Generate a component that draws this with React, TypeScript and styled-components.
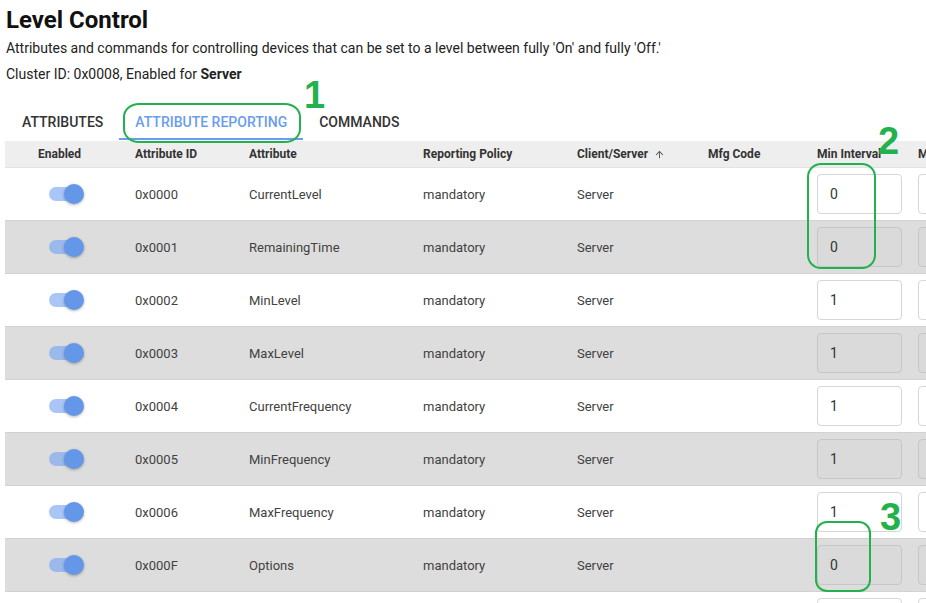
import React from "react";
import styled, { createGlobalStyle } from "styled-components";

const Global = createGlobalStyle`
  html, body { margin: 0; padding: 0; background: #fff; overflow: hidden; }
  body { font-family: Roboto, "Liberation Sans", Arial, sans-serif; color: #212121; }
`;

const Page = styled.div`
  position: relative;
  width: 926px;
  height: 603px;
  overflow: hidden;
`;

const Header = styled.div`
  padding: 4px 0 0 6px;
`;

const Title = styled.h1`
  margin: 0;
  font-size: 24px;
  line-height: 32px;
  font-weight: 700;
  color: #111;
`;

const Desc = styled.p`
  margin: 2px 0 0;
  font-size: 14px;
  line-height: 20px;
  color: #222;
`;

const Cluster = styled.p`
  margin: 6px 0 0;
  font-size: 14px;
  line-height: 20px;
  color: #222;
  b { font-weight: 700; }
`;

const TabBar = styled.div`
  display: flex;
  margin-top: 17px;
  padding-left: 6px;
  height: 40px;
`;

const Tab = styled.div<{ $active?: boolean }>`
  position: relative;
  padding: 0 16px;
  display: flex;
  align-items: center;
  padding-top: 1px;
  font-size: 14px;
  font-weight: 500;
  letter-spacing: 0;
  text-transform: uppercase;
  color: ${(p) => (p.$active ? "#6a9cf0" : "#333")};
  &::after {
    content: "";
    display: ${(p) => (p.$active ? "block" : "none")};
    position: absolute;
    left: 0;
    right: 0;
    bottom: 1px;
    height: 2px;
    background: #6a9cf0;
  }
`;

const Table = styled.div`
  margin-left: 5px;
  width: 1100px;
`;

const cols = "130px 114px 174px 154px 131px 109px 101px 1fr";

const HeadRow = styled.div`
  display: grid;
  grid-template-columns: ${cols};
  height: 26px;
  align-items: center;
  background: #eeeeee;
  border-bottom: 1px solid #e2e2e2;
  font-size: 12px;
  font-weight: 700;
  color: #333;
`;

const HeadCell = styled.div<{ $pad?: number }>`
  padding-left: ${(p) => p.$pad ?? 0}px;
  display: flex;
  align-items: center;
  gap: 6px;
  white-space: nowrap;
`;

const Row = styled.div<{ $alt: boolean }>`
  display: grid;
  grid-template-columns: ${cols};
  height: 52px;
  align-items: center;
  background: ${(p) => (p.$alt ? "#dddddd" : "#ffffff")};
  border-bottom: 1px solid #d2d2d2;
  font-size: 13px;
  color: #424242;
`;

const Cell = styled.div`
  white-space: nowrap;
`;

const SwitchCell = styled.div`
  padding-left: 44px;
  display: flex;
  align-items: center;
`;

const Track = styled.div<{ $alt: boolean }>`
  position: relative;
  width: 32px;
  height: 14px;
  border-radius: 7px;
  background: ${(p) => (p.$alt ? "#9cb9ec" : "#a9c6f6")};
`;

const Thumb = styled.div`
  position: absolute;
  top: -3px;
  right: -3px;
  width: 20px;
  height: 20px;
  border-radius: 50%;
  background: #6497e8;
  box-shadow: 0 1px 3px rgba(0, 0, 0, 0.3);
`;

const Input = styled.div<{ $alt: boolean }>`
  box-sizing: border-box;
  width: 85px;
  height: 40px;
  border: 1px solid ${(p) => (p.$alt ? "#c6c6c6" : "#d6d6d6")};
  border-radius: 4px;
  background: ${(p) => (p.$alt ? "#dadada" : "#ffffff")};
  padding-left: 12px;
  display: flex;
  align-items: center;
  font-size: 14px;
  color: #333;
`;

const Mark = styled.div`
  position: absolute;
  border: 2.5px solid #22b14c;
  box-sizing: border-box;
  pointer-events: none;
`;

const Num = styled.div`
  position: absolute;
  font-family: "Liberation Sans", Arial, sans-serif;
  font-weight: 700;
  font-size: 38px;
  line-height: 1;
  color: #22b14c;
`;

const rows = [
  { id: "0x0000", name: "CurrentLevel", min: "0" },
  { id: "0x0001", name: "RemainingTime", min: "0" },
  { id: "0x0002", name: "MinLevel", min: "1" },
  { id: "0x0003", name: "MaxLevel", min: "1" },
  { id: "0x0004", name: "CurrentFrequency", min: "1" },
  { id: "0x0005", name: "MinFrequency", min: "1" },
  { id: "0x0006", name: "MaxFrequency", min: "1" },
  { id: "0x000F", name: "Options", min: "0" },
];

export default function App() {
  return (
    <Page>
      <Global />
      <Header>
        <Title>Level Control</Title>
        <Desc>
          Attributes and commands for controlling devices that can be set to a level between fully 'On' and fully 'Off.'
        </Desc>
        <Cluster>
          Cluster ID: 0x0008, Enabled for <b>Server</b>
        </Cluster>
      </Header>
      <TabBar>
        <Tab>Attributes</Tab>
        <Tab $active>Attribute Reporting</Tab>
        <Tab>Commands</Tab>
      </TabBar>
      <Table>
        <HeadRow>
          <HeadCell $pad={33}>Enabled</HeadCell>
          <HeadCell>Attribute ID</HeadCell>
          <HeadCell>Attribute</HeadCell>
          <HeadCell>Reporting Policy</HeadCell>
          <HeadCell>
            Client/Server
            <svg width="11" height="11" viewBox="0 0 24 24">
              <path d="M4 12l1.41 1.41L11 7.83V20h2V7.83l5.58 5.59L20 12l-8-8-8 8z" fill="#555" />
            </svg>
          </HeadCell>
          <HeadCell>Mfg Code</HeadCell>
          <HeadCell>Min Interval</HeadCell>
          <HeadCell>M</HeadCell>
        </HeadRow>
        {rows.map((r, i) => {
          const alt = i % 2 === 1;
          return (
            <Row key={r.id} $alt={alt}>
              <SwitchCell>
                <Track $alt={alt}>
                  <Thumb />
                </Track>
              </SwitchCell>
              <Cell>{r.id}</Cell>
              <Cell>{r.name}</Cell>
              <Cell>mandatory</Cell>
              <Cell>Server</Cell>
              <Cell></Cell>
              <Cell>
                <Input $alt={alt}>{r.min}</Input>
              </Cell>
              <Cell>
                <Input $alt={alt}></Input>
              </Cell>
            </Row>
          );
        })}
        <Row $alt={false}>
          <Cell />
          <Cell />
          <Cell />
          <Cell />
          <Cell />
          <Cell />
          <Cell>
            <Input $alt={false} />
          </Cell>
          <Cell>
            <Input $alt={false} />
          </Cell>
        </Row>
      </Table>
      <Mark style={{ left: 123, top: 103, width: 178, height: 40, borderRadius: "16px / 14px" }} />
      <Num style={{ left: 304, top: 76 }}>1</Num>
      <Mark style={{ left: 807, top: 163, width: 69, height: 106, borderRadius: 14 }} />
      <Num style={{ left: 878, top: 122 }}>2</Num>
      <Mark style={{ left: 815, top: 521, width: 56, height: 71, borderRadius: 12 }} />
      <Num style={{ left: 880, top: 498 }}>3</Num>
    </Page>
  );
}
